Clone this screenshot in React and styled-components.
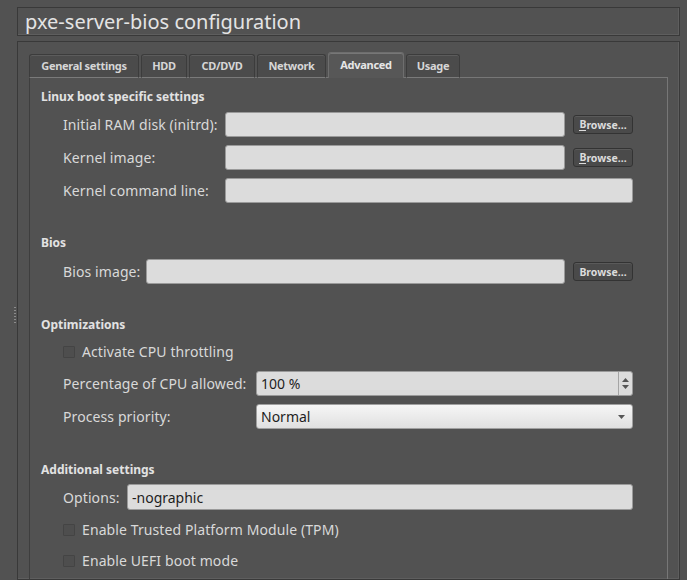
import React from "react";
import styled, { createGlobalStyle } from "styled-components";

const Global = createGlobalStyle`
  html, body { margin: 0; padding: 0; background: #525252; }
  body { font-family: "Noto Sans", "DejaVu Sans", sans-serif; color: #dedede; }
  * { box-sizing: border-box; }
`;

const Page = styled.div`
  width: 687px;
  height: 580px;
  overflow: hidden;
  display: flex;
  background: #525252;
`;

const Splitter = styled.div`
  width: 17px;
  flex: none;
  display: flex;
  justify-content: flex-end;
  padding: 307px 1px 0 0;
`;

const GripDots = styled.div`
  width: 2px;
  height: 17px;
  background: repeating-linear-gradient(to bottom, #8c8c8c 0 1px, transparent 1px 3px);
`;

const Main = styled.div`
  flex: none;
  width: 663px;
  padding-top: 7px;
  display: flex;
  flex-direction: column;
  gap: 5px;
`;

const TitleFrame = styled.div`
  height: 29px;
  border: 1px solid #393939;
  box-shadow: inset -1px -1px 0 #5e5e5e;
  padding: 0 7px;
  display: flex;
  align-items: center;
`;

const Title = styled.h1`
  margin: 0;
  font-weight: normal;
  font-size: 20px;
  color: #e4e4e4;
`;

const Frame = styled.div`
  height: 560px;
  border: 1px solid #393939;
  box-shadow: inset -1px -1px 0 #5e5e5e;
  padding: 10px 10px 0 11px;
  display: flex;
  flex-direction: column;
`;

const TabBar = styled.div`
  display: flex;
  align-items: flex-end;
  gap: 2px;
  height: 26px;
  position: relative;
  z-index: 1;
  margin-bottom: -1px;
`;

const Tab = styled.div`
  width: ${(p) => p.$w}px;
  height: ${(p) => (p.$active ? 26 : 24)}px;
  display: flex;
  align-items: center;
  justify-content: center;
  white-space: nowrap;
  font-size: 11px;
  font-weight: bold;
  letter-spacing: -0.3px;
  color: ${(p) => (p.$active ? "#e6e6e6" : "#d6d6d6")};
  background: ${(p) => (p.$active ? "#575757" : "#4b4b4b")};
  border: 1px solid ${(p) => (p.$active ? "#6e6e6e" : "#3c3c3c")};
  border-bottom: ${(p) => (p.$active ? "none" : "1px solid #7a7a7a")};
  border-radius: 3px 3px 0 0;
  box-shadow: inset 0 1px 0 ${(p) => (p.$active ? "#777" : "#5c5c5c")};
  padding-bottom: ${(p) => (p.$active ? 3 : 2)}px;
`;

const Pane = styled.div`
  flex: 1;
  width: 639px;
  border: 1px solid #777;
  border-bottom: none;
  border-left-color: #3e3e3e;
  padding: 10px 34px 0 11px;
  display: flex;
  flex-direction: column;
`;

const Heading = styled.div`
  font-size: 12px;
  font-weight: bold;
  color: #e2e2e2;
  height: 17px;
  padding-top: 1px;
  line-height: 16px;
  margin-top: ${(p) => p.$top || 0}px;
`;

const Grid = styled.div`
  display: grid;
  grid-template-columns: ${(p) => p.$labelW}px 1fr auto;
  column-gap: 8px;
  row-gap: ${(p) => p.$gap ?? 8}px;
  margin-top: ${(p) => p.$top ?? 7}px;
  padding-left: 22px;
  align-items: center;
`;

const Label = styled.label`
  font-size: 14px;
  letter-spacing: 0.1px;
  color: #d9d9d9;
  white-space: nowrap;
`;

const Input = styled.div`
  grid-column: ${(p) => (p.$span ? "2 / 4" : "2 / 3")};
  height: ${(p) => p.$h || 25}px;
  background: #dcdcdc;
  border: 1px solid #9a9a9a;
  border-radius: 3px;
  padding: 0 4px;
  display: flex;
  align-items: center;
  font-size: 14px;
  color: #1e1e1e;
`;

const Button = styled.button`
  width: 60px;
  height: 19px;
  background: #4a4a4a;
  border: 1px solid #333;
  border-radius: 3px;
  box-shadow: inset 0 1px 0 #5a5a5a;
  color: #dcdcdc;
  font-family: inherit;
  font-size: 10.5px;
  font-weight: bold;
  padding: 0;
  display: flex;
  align-items: center;
  justify-content: center;
  u { text-decoration: none; border-bottom: 1px solid #dcdcdc; line-height: 11px; }
`;

const CheckRow = styled.div`
  grid-column: 1 / 4;
  height: 23px;
  display: flex;
  align-items: center;
  gap: 7px;
`;

const Box = styled.span`
  width: 12px;
  height: 12px;
  border: 1px solid #444;
  background: #4e4e4e;
  border-radius: 1px;
`;

const Spin = styled(Input)`
  padding-right: 0;
  justify-content: space-between;
`;

const SpinArrows = styled.div`
  width: 14px;
  height: 100%;
  border-left: 1px solid #a4a4a4;
  display: flex;
  flex-direction: column;
  align-items: center;
  justify-content: center;
  gap: 3px;
`;

const Combo = styled(Input)`
  background: linear-gradient(#f6f6f6, #e0e0e0);
  border-color: #a0a0a0;
  justify-content: space-between;
  padding-right: 7px;
`;

const Up = () => (
  <svg width="7" height="4" viewBox="0 0 7 4"><path d="M0 4 L3.5 0 L7 4 Z" fill="#555" /></svg>
);
const Down = () => (
  <svg width="7" height="4" viewBox="0 0 7 4"><path d="M0 0 L7 0 L3.5 4 Z" fill="#555" /></svg>
);

const Check = ({ children }) => (
  <CheckRow>
    <Box />
    <Label>{children}</Label>
  </CheckRow>
);

export default function App() {
  return (
    <Page>
      <Global />
      <Splitter>
        <GripDots />
      </Splitter>
      <Main>
        <TitleFrame>
          <Title>pxe-server-bios configuration</Title>
        </TitleFrame>
        <Frame>
          <TabBar>
            <Tab $w={110}>General settings</Tab>
            <Tab $w={46}>HDD</Tab>
            <Tab $w={66}>CD/DVD</Tab>
            <Tab $w={69}>Network</Tab>
            <Tab $w={76} $active>Advanced</Tab>
            <Tab $w={54}>Usage</Tab>
          </TabBar>
          <Pane>
            <Heading>Linux boot specific settings</Heading>
            <Grid $labelW={154}>
              <Label>Initial RAM disk (initrd):</Label>
              <Input />
              <Button><u>B</u>rowse...</Button>
              <Label>Kernel image:</Label>
              <Input />
              <Button><u>B</u>rowse...</Button>
              <Label>Kernel command line:</Label>
              <Input $span />
            </Grid>
            <Heading $top={31}>Bios</Heading>
            <Grid $labelW={75} $top={8}>
              <Label>Bios image:</Label>
              <Input />
              <Button>Browse...</Button>
            </Grid>
            <Heading $top={32}>Optimizations</Heading>
            <Grid $labelW={185}>
              <Check>Activate CPU throttling</Check>
              <Label>Percentage of CPU allowed:</Label>
              <Spin $span>
                <span>100 %</span>
                <SpinArrows>
                  <Up />
                  <Down />
                </SpinArrows>
              </Spin>
              <Label>Process priority:</Label>
              <Combo $span>
                <span>Normal</span>
                <Down />
              </Combo>
            </Grid>
            <Heading $top={32}>Additional settings</Heading>
            <Grid $labelW={56} $top={6}>
              <Label>Options:</Label>
              <Input $span $h={26}>-nographic</Input>
              <Check>Enable Trusted Platform Module (TPM)</Check>
              <Check>Enable UEFI boot mode</Check>
            </Grid>
          </Pane>
        </Frame>
      </Main>
    </Page>
  );
}
